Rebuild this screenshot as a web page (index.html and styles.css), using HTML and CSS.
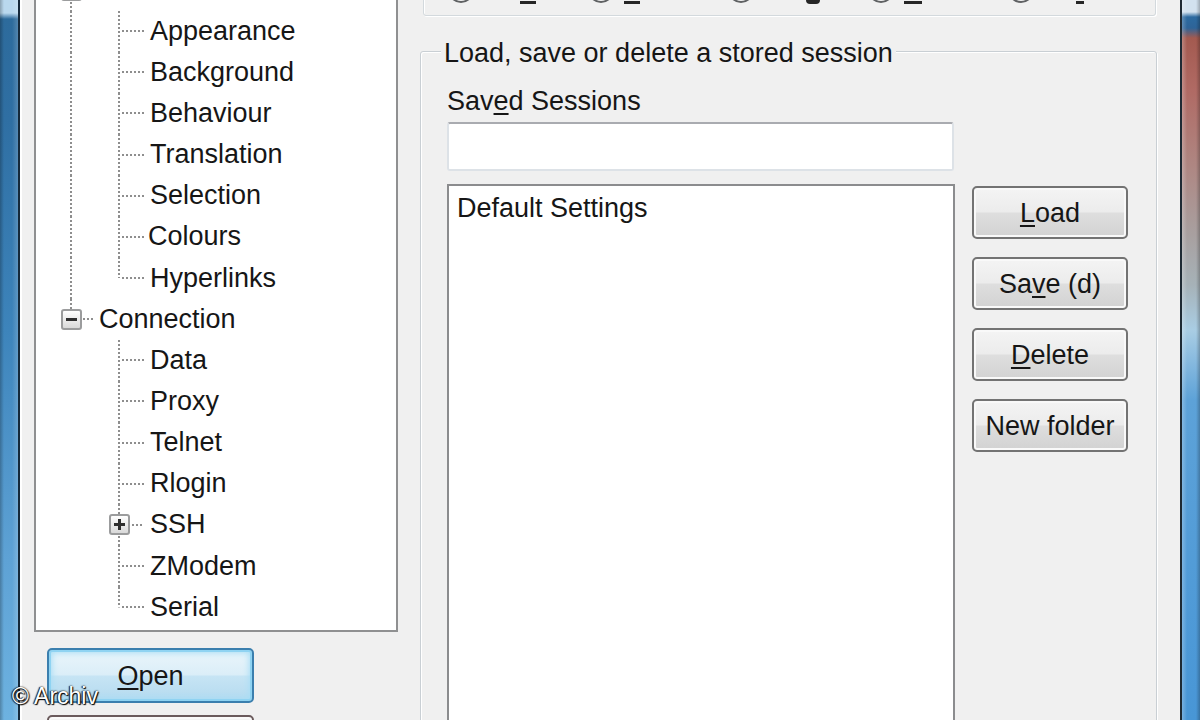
FILE: index.html
```html
<!DOCTYPE html>
<html>
<head>
<meta charset="utf-8">
<link rel="stylesheet" href="styles.css">
</head>
<body>
<div class="screen">
  <div class="frame-left"></div>
  <div class="dialog">
    <div class="left-col">
      <div class="tree">
        <div class="row">
          <div class="c1 node-full"><span class="exp minus"></span></div>
          <span class="lbl"></span>
        </div>
        <div class="row"><div class="c1 vfull"></div><div class="c2 branch"></div><span class="lbl">Appearance</span></div>
        <div class="row"><div class="c1 vfull"></div><div class="c2 branch"></div><span class="lbl">Background</span></div>
        <div class="row"><div class="c1 vfull"></div><div class="c2 branch"></div><span class="lbl">Behaviour</span></div>
        <div class="row"><div class="c1 vfull"></div><div class="c2 branch"></div><span class="lbl">Translation</span></div>
        <div class="row"><div class="c1 vfull"></div><div class="c2 branch"></div><span class="lbl">Selection</span></div>
        <div class="row"><div class="c1 vfull"></div><div class="c2 branch"></div><span class="lbl lbl-tight">Colours</span></div>
        <div class="row"><div class="c1 vfull"></div><div class="c2 branch-last"></div><span class="lbl">Hyperlinks</span></div>
        <div class="row">
          <div class="c1 node-last"><span class="exp minus"></span></div>
          <span class="lbl">Connection</span>
        </div>
        <div class="row"><div class="c1"></div><div class="c2 branch"></div><span class="lbl">Data</span></div>
        <div class="row"><div class="c1"></div><div class="c2 branch"></div><span class="lbl">Proxy</span></div>
        <div class="row"><div class="c1"></div><div class="c2 branch"></div><span class="lbl">Telnet</span></div>
        <div class="row"><div class="c1"></div><div class="c2 branch"></div><span class="lbl">Rlogin</span></div>
        <div class="row"><div class="c1"></div><div class="c2 sub-node"><span class="exp plus"></span></div><span class="lbl">SSH</span></div>
        <div class="row"><div class="c1"></div><div class="c2 branch"></div><span class="lbl">ZModem</span></div>
        <div class="row"><div class="c1"></div><div class="c2 branch-last"></div><span class="lbl">Serial</span></div>
      </div>
      <button class="btn btn-open"><u>O</u>pen</button>
      <div class="btn btn-cancel"></div>
    </div>

    <div class="right-col">
      <div class="group-top">
        <div class="radios">
          <div class="radio"><span class="circle"></span><span class="rl" style="width:54px"><span class="ul" style="margin-left:38px;width:16px"></span></span></div>
          <div class="radio"><span class="circle"></span><span class="rl" style="width:75px"><span class="ul" style="margin-left:2px;width:16px"></span></span></div>
          <div class="radio"><span class="circle"></span><span class="rl" style="width:80px"><span class="ul ul-g" style="margin-left:44px;width:14px"></span></span></div>
          <div class="radio"><span class="circle"></span><span class="rl" style="width:60px"><span class="ul" style="margin-left:2px;width:18px"></span></span></div>
          <div class="radio"><span class="circle"></span><span class="rl" style="width:70px"><span class="ul" style="margin-left:34px;width:8px"></span></span></div>
        </div>
      </div>

      <div class="group">
        <div class="legend">Load, save or delete a stored session</div>
        <div class="field-label">Sav<u>e</u>d Sessions</div>
        <div class="textbox"></div>
        <div class="list-row">
          <div class="listbox">
            <div class="list-item">Default Settings</div>
          </div>
          <div class="btn-col">
            <button class="btn"><u>L</u>oad</button>
            <button class="btn">Sa<u>v</u>e (d)</button>
            <button class="btn"><u>D</u>elete</button>
            <button class="btn">New folder</button>
          </div>
        </div>
      </div>
    </div>
  </div>
  <div class="frame-right"></div>
  <div class="watermark">© Archiv</div>
</div>
</body>
</html>
```
FILE: styles.css
```css
* { box-sizing: border-box; }
html, body { margin: 0; padding: 0; }
body {
  width: 1200px;
  height: 720px;
  overflow: hidden;
  font-family: "Liberation Sans", Arial, sans-serif;
  font-size: 27px;
  color: #161616;
  background: #f0f0f0;
}
u { text-decoration-thickness: 2px; text-underline-offset: 3px; }

.screen {
  position: relative;
  display: flex;
  width: 1200px;
  height: 720px;
  overflow: hidden;
}

.frame-left {
  width: 20px;
  flex: none;
  border-right: 2px solid #15293a;
  background:
    linear-gradient(to right, rgba(0,0,0,0.25) 0, rgba(0,0,0,0) 4px, rgba(255,255,255,0) 12px, rgba(255,255,255,0.18) 18px),
    linear-gradient(to bottom, #b9d8ee 0, #b9d8ee 13px, #2d6b9c 19px, #2f6fa3 120px, #3d84bb 330px, #5ea2d5 560px, #6db2e0 720px);
}

.frame-right {
  width: 20px;
  flex: none;
  border-left: 2px solid #1e2a34;
  background:
    linear-gradient(to right, rgba(255,255,255,0.25) 0, rgba(255,255,255,0) 5px, rgba(0,0,0,0) 14px, rgba(0,0,0,0.25) 18px),
    linear-gradient(to bottom, #d2e2ef 0, #d2e2ef 12px, #2c6aa0 17px, #2e6498 28px, #a35a50 38px, #b06a64 90px, #ae8884 170px, #a8a0a0 235px, #a6b2b8 285px, #a9cde4 330px, #5da2d8 400px, #4896d6 720px);
}

.dialog {
  flex: 1;
  display: flex;
  background: #f0f0f0;
  box-shadow: inset 2px 0 0 #ffffff;
}

/* ---------- left column ---------- */
.left-col {
  width: 380px;
  flex: none;
  padding-left: 14px;
  display: flex;
  flex-direction: column;
  align-items: flex-start;
}

.tree {
  width: 364px;
  height: 672px;
  margin-top: -40px;
  padding-top: 7.5px;
  background: #ffffff;
  border: 2px solid #8f9091;
  overflow: hidden;
  flex: none;
}

.row {
  display: flex;
  align-items: center;
  height: 41.15px;
  white-space: nowrap;
}
.c1 { width: 59px; height: 100%; flex: none; display: flex; align-items: center; padding-left: 25px; }
.c2 { width: 51px; height: 100%; flex: none; display: flex; align-items: center; padding-left: 14px; }
.lbl { margin-left: 4px; line-height: 41px; }
.lbl-tight { margin-left: 2px; }

.vfull {
  background: repeating-linear-gradient(to bottom, #8e8e8e 0 2px, transparent 2px 4px) 34px 0 / 2px 100% no-repeat;
}
.branch {
  background:
    repeating-linear-gradient(to bottom, #8e8e8e 0 2px, transparent 2px 4px) 23px 0 / 2px 100% no-repeat,
    repeating-linear-gradient(to right, #8e8e8e 0 2px, transparent 2px 4px) 27px 50% / 22px 2px no-repeat;
}
.branch-last {
  background:
    repeating-linear-gradient(to bottom, #8e8e8e 0 2px, transparent 2px 4px) 23px 0 / 2px 50% no-repeat,
    repeating-linear-gradient(to right, #8e8e8e 0 2px, transparent 2px 4px) 27px 50% / 22px 2px no-repeat;
}
.node-full {
  background:
    repeating-linear-gradient(to bottom, #8e8e8e 0 2px, transparent 2px 4px) 34px 0 / 2px 100% no-repeat,
    repeating-linear-gradient(to right, #8e8e8e 0 2px, transparent 2px 4px) 47px 50% / 12px 2px no-repeat;
}
.node-last {
  background:
    repeating-linear-gradient(to bottom, #8e8e8e 0 2px, transparent 2px 4px) 34px 0 / 2px 50% no-repeat,
    repeating-linear-gradient(to right, #8e8e8e 0 2px, transparent 2px 4px) 47px 50% / 12px 2px no-repeat;
}
.sub-node {
  background:
    repeating-linear-gradient(to bottom, #8e8e8e 0 2px, transparent 2px 4px) 23px 0 / 2px 100% no-repeat,
    repeating-linear-gradient(to right, #8e8e8e 0 2px, transparent 2px 4px) 37px 50% / 12px 2px no-repeat;
}

.exp {
  width: 21px;
  height: 21px;
  flex: none;
  border: 2px solid #9b9c9d;
  border-radius: 3px;
  background-color: #f4f4f4;
  background-image: linear-gradient(#ffffff, #d9d9d9);
}
.minus {
  background-image:
    linear-gradient(#2e2e2e, #2e2e2e),
    linear-gradient(#ffffff, #d9d9d9);
  background-size: 11px 3px, 100% 100%;
  background-position: center, 0 0;
  background-repeat: no-repeat;
}
.plus {
  background-image:
    linear-gradient(#2e2e2e, #2e2e2e),
    linear-gradient(#2e2e2e, #2e2e2e),
    linear-gradient(#ffffff, #d9d9d9);
  background-size: 11px 3px, 3px 11px, 100% 100%;
  background-position: center, center, 0 0;
  background-repeat: no-repeat;
}

.btn {
  font-family: "Liberation Sans", Arial, sans-serif;
  font-size: 27px;
  color: #161616;
  padding: 0;
  border: 2px solid #737373;
  border-radius: 5px;
  background: linear-gradient(to bottom, #f4f4f4 0%, #ececec 48%, #dedede 52%, #d2d2d2 100%);
  box-shadow: inset 0 0 0 2px #f9f9f9;
  line-height: 1;
  display: flex;
  align-items: center;
  justify-content: center;
}

.btn-open {
  width: 207px;
  height: 55px;
  margin-top: 16px;
  margin-left: 13px;
  border-color: #3b7fae;
  background: linear-gradient(to bottom, #eaf5fb 0%, #dbeef8 48%, #c6e4f4 52%, #b4daef 100%);
  box-shadow: inset 0 0 0 2px #8fd3f2, inset 0 0 6px 3px #a8def5;
  flex: none;
  padding-top: 2px;
}
.btn-cancel {
  width: 207px;
  height: 55px;
  margin-top: 12px;
  margin-left: 13px;
  border-color: #6a5a5c;
  flex: none;
}

/* ---------- right column ---------- */
.right-col {
  flex: 1;
  display: flex;
  flex-direction: column;
  align-items: flex-start;
}

.group-top {
  width: 733px;
  height: 36px;
  margin-top: -20px;
  margin-left: 23px;
  border: 1px solid #d3d9dd;
  border-radius: 3px;
  box-shadow: inset 1px 1px 0 #ffffff, 1px 1px 0 #ffffff;
  flex: none;
}
.radios {
  display: grid;
  grid-template-columns: repeat(5, 140px);
  padding-left: 24px;
  margin-top: -12px;
  height: 41px;
}
.radio {
  display: flex;
  align-items: center;
  gap: 8px;
  height: 41px;
}
.circle {
  width: 26px;
  height: 26px;
  border: 2px solid #5f6163;
  border-radius: 50%;
  background: radial-gradient(circle, #ffffff 0 40%, #e4e4e4 100%);
  flex: none;
}
.rl {
  display: flex;
  align-self: stretch;
  align-items: flex-end;
  padding-bottom: 6px;
  flex: none;
}
.ul {
  display: block;
  height: 3px;
  background: #262626;
}
.ul-g { height: 5px; border-radius: 0 0 4px 4px; }

.group {
  width: 737px;
  height: 720px;
  margin-top: 35px;
  margin-left: 20px;
  border: 1px solid #c9cfd4;
  border-radius: 3px;
  box-shadow: inset 1px 1px 0 #ffffff, 1px 1px 0 #ffffff;
  display: flex;
  flex-direction: column;
  align-items: flex-start;
  flex: none;
}
.legend {
  margin-top: -15px;
  margin-left: 20px;
  padding: 0 3px;
  line-height: 32px;
  background: #f0f0f0;
  white-space: nowrap;
}
.field-label {
  margin-top: 16px;
  margin-left: 26px;
  line-height: 32px;
}
.textbox {
  width: 507px;
  height: 49px;
  margin-top: 5px;
  margin-left: 26px;
  background: #ffffff;
  border: 2px solid #dde2e7;
  border-top-color: #a9abb0;
  border-radius: 3px;
  flex: none;
}
.list-row {
  display: flex;
  align-items: flex-start;
  margin-top: 13px;
  margin-left: 26px;
}
.listbox {
  width: 508px;
  height: 600px;
  background: #ffffff;
  border: 2px solid #8b8c8e;
  padding: 5px 8px;
  flex: none;
}
.list-item { line-height: 34px; }
.btn-col {
  display: flex;
  flex-direction: column;
  gap: 18px;
  margin-left: 17px;
  margin-top: 2px;
}
.btn-col .btn {
  width: 156px;
  height: 53px;
  padding-top: 2px;
}

.watermark {
  position: absolute;
  left: 12px;
  top: 683px;
  font-family: "Liberation Sans", Arial, sans-serif;
  font-size: 23px;
  color: #ffffff;
  text-shadow: 0 0 2px #000, 1px 1px 1px #000, -1px 0 1px #222;
  white-space: nowrap;
}
```
